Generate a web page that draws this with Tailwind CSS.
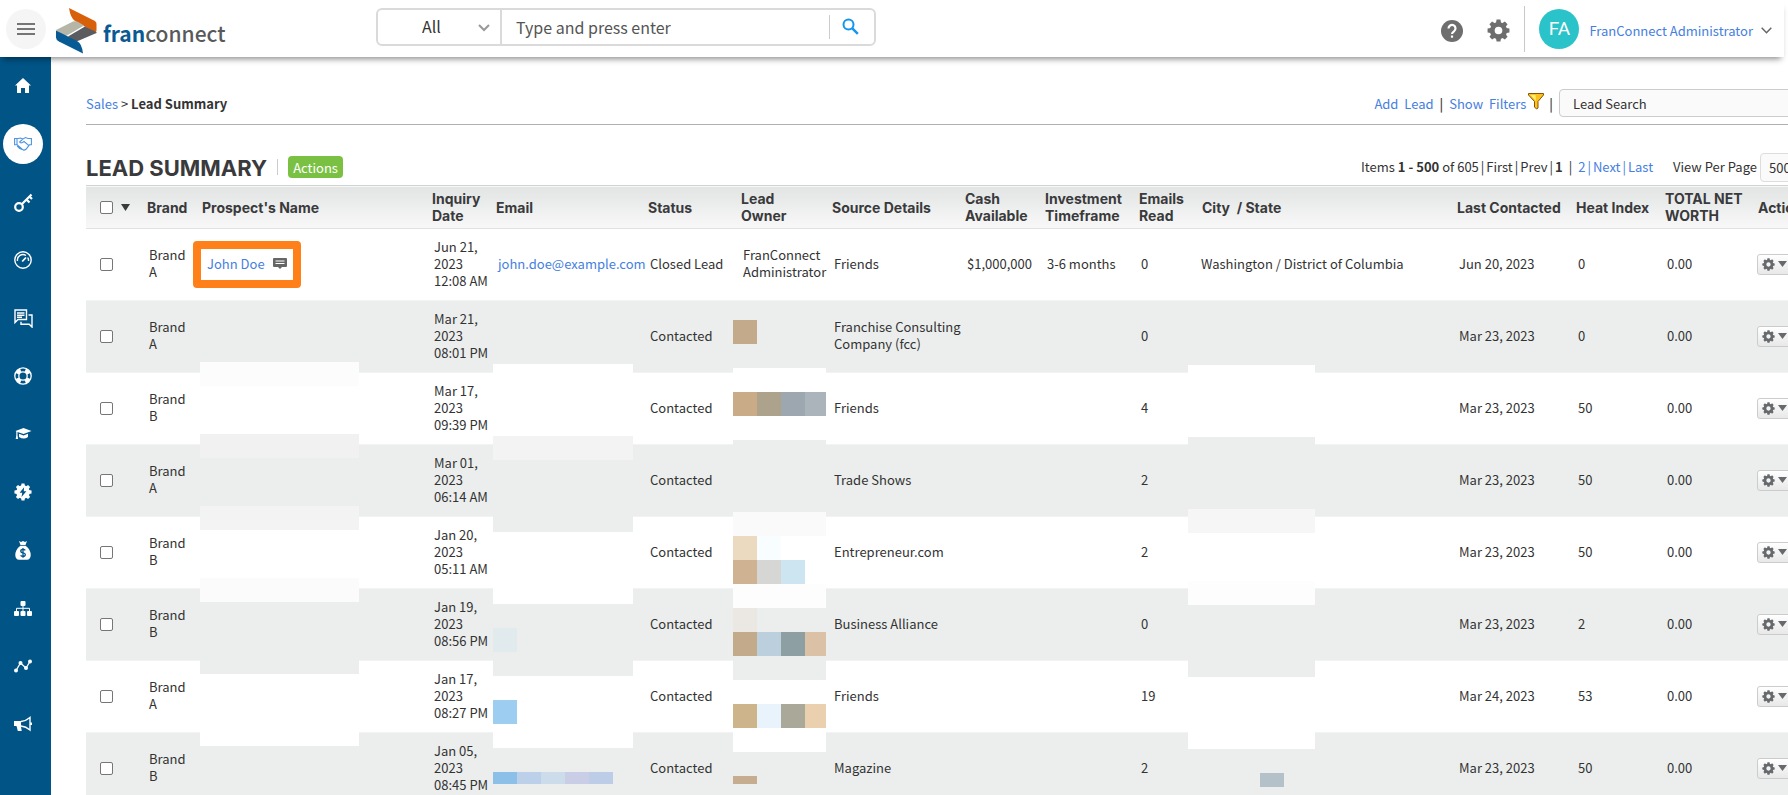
<!DOCTYPE html>
<html lang="en">
<head>
<meta charset="utf-8">
<title>Lead Summary</title>
<script src="https://cdn.jsdelivr.net/npm/@tailwindcss/browser@4"></script>
</head>
<body class="bg-white overflow-hidden h-screen flex flex-col text-[13px] leading-[17px] text-[#333] font-['Noto_Sans_CJK_SC','Noto_Sans',sans-serif]">

<svg class="hidden" aria-hidden="true">
  <symbol id="gear" viewBox="0 0 24 24">
    <circle cx="12" cy="12" r="6.5" fill="none" stroke="currentColor" stroke-width="5"/>
    <g fill="currentColor">
      <path id="tooth" d="M9.4 4 10 0.6h4L14.600 4v2H9.400z"/>
      <use href="#tooth" transform="rotate(45 12 12)"/><use href="#tooth" transform="rotate(90 12 12)"/>
      <use href="#tooth" transform="rotate(135 12 12)"/><use href="#tooth" transform="rotate(180 12 12)"/>
      <use href="#tooth" transform="rotate(225 12 12)"/><use href="#tooth" transform="rotate(270 12 12)"/>
      <use href="#tooth" transform="rotate(315 12 12)"/>
    </g>
  </symbol>
</svg>

<header class="relative z-20 shrink-0 h-[57px] mr-1 bg-white shadow-[0_5px_6px_-3px_rgba(0,0,0,0.45)] flex items-center">
  <button aria-label="Menu" class="ml-1.5 size-10 rounded-full bg-[#f5f5f5] flex items-center justify-center">
    <svg class="w-[18px] h-3" viewBox="0 0 18 12" fill="#757575"><path d="M0 0h18v2H0zM0 5h18v2H0zM0 10h18v2H0z"/></svg>
  </button>
  <a href="#" class="ml-2.5 w-[164px] flex items-center text-[21px] leading-6">
    <svg class="shrink-0 w-[41px] h-[46px] mt-1" viewBox="0 0 41 46" aria-hidden="true">
      <path d="M13 0l24 12q3.500 1.500 3.500 4v6.500q0 1.500-2 1.500L19 13q-4.500-3-6-13z" fill="#d9600a"/>
      <path d="M0 22l17-8.500q3-1 6 1l5 3L11 27.500 8 28 0 22z" fill="#b5b6a8"/>
      <path d="M29 18.500L40.500 24v1L23 32.500q-3 1-6 0L12 28.500z" fill="#5b5c60"/>
      <path d="M0 22.500L21 33q5 2.500 6 12.500L3 33.500q-3-1.500-3-4z" fill="#075a93"/>
    </svg>
    <span class="ml-1.5 mt-2"><b class="text-[#075a93] font-bold">fran</b><span class="text-[#58595b] font-medium">connect</span></span>
  </a>

  <form class="ml-[156px] w-[500px] h-[38px] -mt-1 border-2 border-[#dadada] rounded-md flex items-center text-[16px]">
    <div class="relative w-[124px] h-full border-r-2 border-[#dadada]">
      <select aria-label="Search scope" class="appearance-none size-full pl-[44px] outline-none"><option>All</option></select>
      <svg class="absolute right-2.5 top-3.5 w-3 h-2 pointer-events-none" viewBox="0 0 12 8" fill="none" stroke="#999" stroke-width="2"><path d="M1 1l5 5 5-5"/></svg>
    </div>
    <input aria-label="Search" placeholder="Type and press enter" class="flex-1 min-w-0 h-full pl-3.5 outline-none placeholder:text-[#555]">
    <button type="button" aria-label="Search" class="w-[45px] h-6 border-l border-[#ccc] pl-3">
      <svg class="size-[17px]" viewBox="0 0 17 17" fill="none" stroke="#1296ee" stroke-width="2"><circle cx="6.500" cy="6.500" r="5"/><path d="M10.300 10.300l5.500 5.500" stroke-width="2.500"/></svg>
    </button>
  </form>

  <div class="ml-auto h-full flex items-center">
    <button aria-label="Help" class="mt-1"><svg class="size-[22px]" viewBox="0 0 22 22"><circle cx="11" cy="11" r="11" fill="#6e6e6e"/><path d="M7.500 8.500a3.500 3.500 0 1 1 5.500 2.800q-2 1.400-2 2.600" fill="none" stroke="#fff" stroke-width="2.200"/><path d="M9.900 15.500h2.200v2.200H9.900z" fill="#fff"/></svg></button>
    <button aria-label="Settings" class="mt-1 ml-6 text-[#6e6e6e]"><svg class="size-[23px]"><use href="#gear"/></svg></button>
    <div class="ml-3.5 w-px h-[46px] bg-[#c8c8c8]"></div>
    <span class="ml-3.5 size-10 rounded-full bg-[#2bc3ca] text-white text-[19px] flex items-center justify-center font-[Roboto,sans-serif]">FA</span>
    <button class="ml-2.5 mt-1 mr-3 flex items-center text-[#4580e0]">FranConnect Administrator
      <svg class="ml-2 w-[11px] h-[7px]" viewBox="0 0 11 7" fill="none" stroke="#666" stroke-width="1.500"><path d="M.7.700l4.800 5 4.800-5"/></svg>
    </button>
  </div>
</header>

<div class="flex flex-1 min-h-0">
  <nav aria-label="Modules" class="shrink-0 w-[51px] pr-[5px] bg-[#005486] text-white">
    <ul class="flex flex-col items-center">
      <li><a href="#" aria-label="Home" class="flex h-[58px] items-center"><svg class="size-[18px]" viewBox="0 0 18 18" fill="currentColor"><path d="M9 1l8 7.500h-2V16h-4v-5H7v5H3V8.500H1z"/></svg></a></li>
      <li><a href="#" aria-label="Sales" class="flex h-[58px] items-center"><span class="size-10 rounded-full bg-white flex items-center justify-center"><svg class="w-[18px] h-[14px]" viewBox="0 0 18 14" fill="none" stroke="#4e93e0" stroke-width="1.100"><path d="M.6 1.500h3.500L6.500 1l2.500 1 2.500-1.400L14 1.500h3.400v6.300h-2L12 12.300q-1.500 1.200-3 .7L3.200 7.800H.600zM9 2L5.500 5q1 1.500 3 .5l1.500-1 5.300 4.400M3.200 9l2.500 2.500 4 1.500M3 1.500v6"/></svg></span></a></li>
      <li><a href="#" aria-label="Franchise keys" class="flex h-[58px] items-center"><svg class="size-[19px]" viewBox="0 0 19 19" fill="none" stroke="currentColor" stroke-width="2.200"><circle cx="5" cy="14" r="3.800"/><path d="M8 11L17.500 1.500M12.500 6.500l3 3M15.500 3.500l2.500 2.500"/></svg></a></li>
      <li><a href="#" aria-label="Dashboard" class="flex h-[58px] items-center"><svg class="size-[18px]" viewBox="0 0 18 18" fill="none" stroke="currentColor" stroke-width="1.400"><circle cx="9" cy="9" r="8.200"/><path d="M3.500 10A5.500 5.500 0 0 1 12 4.500M14.500 10a5.500 5.500 0 0 0-.8-3.500"/><path d="M8.200 10.500L12 6.500" stroke-width="1.800"/></svg></a></li>
      <li><a href="#" aria-label="Messages" class="flex h-[58px] items-center"><svg class="size-[19px]" viewBox="0 0 19 19" fill="none" stroke="currentColor" stroke-width="1.400"><path d="M1 1h11.500v9.500H4L1 13.500zM3 4h7.500M3 6.200h7.500M3 8.300h5M14.500 6H18v12l-2.800-2.800H7v-2.500"/></svg></a></li>
      <li><a href="#" aria-label="Support" class="flex h-[58px] items-center"><svg class="size-[18px]" viewBox="0 0 18 18" fill="none" stroke="currentColor"><circle cx="9" cy="9" r="8.200" stroke-width="1.300"/><circle cx="9" cy="9" r="4.200" stroke-width="1.300"/><circle cx="9" cy="9" r="6.200" stroke-width="3.600" pathLength="80" stroke-dasharray="10 10" stroke-dashoffset="-5"/></svg></a></li>
      <li><a href="#" aria-label="Training" class="flex h-[58px] items-center"><svg class="w-[18px] h-3.5" viewBox="0 0 18 14" fill="currentColor"><path d="M9.500 1L17.500 4 9.500 7 3.500 4.900v3.300l.6 3.800H1.700l.6-3.800V4.400L1.500 4zM5 6.700l4.500 1.700L14 6.700v3.200q-4 3-9 0z"/></svg></a></li>
      <li><a href="#" aria-label="Operations" class="flex h-[58px] items-center"><svg class="size-[18px]" viewBox="0 0 24 24"><circle cx="12" cy="12" r="8" fill="#fff"/><use href="#gear"/><path d="M13.500 5.500L7.500 13H11l-1 5.500 6.500-7.500H13z" fill="#005486"/></svg></a></li>
      <li><a href="#" aria-label="Finance" class="flex h-[58px] items-center"><svg class="w-4 h-[19px]" viewBox="0 0 16 19"><path d="M4 0l2 1 2-1 2 1 2-1-1.500 4h-5zM5.300 4.800h5.400Q16 9 15.700 14.500q-.3 4-3.700 4.300H4Q.600 18.500.300 14.500 0 9 5.300 4.800z" fill="currentColor"/><path d="M10.300 9.300Q9.500 8.300 8 8.300q-2.200 0-2.200 1.700T8 11.800t2.300 1.800T8 15.300q-1.600 0-2.400-1M8 7v9.700" fill="none" stroke="#005486" stroke-width="1.300"/></svg></a></li>
      <li><a href="#" aria-label="Organization" class="flex h-[58px] items-center"><svg class="w-[18px] h-[15px]" viewBox="0 0 18 15" fill="currentColor"><rect x="6.500" y="0" width="5" height="5" rx="1"/><rect x="0" y="10" width="5" height="5" rx="1"/><rect x="6.500" y="10" width="5" height="5" rx="1"/><rect x="13" y="10" width="5" height="5" rx="1"/><path d="M2.500 10V7.300h13V10M9 5v5" fill="none" stroke="currentColor"/></svg></a></li>
      <li><a href="#" aria-label="Analytics" class="flex h-[58px] items-center"><svg class="w-[18px] h-3.5" viewBox="0 0 18 14" fill="currentColor"><path d="M2 11.500L6.500 4l5.500 5L16 2.500" fill="none" stroke="currentColor" stroke-width="1.300"/><circle cx="2" cy="11.500" r="2"/><circle cx="6.500" cy="4" r="2"/><circle cx="12" cy="9" r="2"/><circle cx="16" cy="2.500" r="2"/></svg></a></li>
      <li><a href="#" aria-label="Marketing" class="flex h-[58px] items-center"><svg class="w-[18px] h-4" viewBox="0 0 18 16" fill="currentColor"><path d="M0 5h7v5.500l.7 4.500H3.800L2.500 10H0z"/><path d="M7 5.500Q12 5 16 1.500v12.500Q12 10.500 7 10M17.300 6.500v2.500" fill="none" stroke="currentColor" stroke-width="1.400"/></svg></a></li>
    </ul>
  </nav>

  <main class="flex-1 min-w-0 overflow-hidden pl-[35px]">
    <div class="min-w-[1734px]">
      <div class="h-[68px] pt-8 border-b border-[#b0b0b0] flex justify-between">
        <p class="pt-1.5"><a href="#" class="text-[#4580e0]">Sales</a> &gt; <b>Lead Summary</b></p>
        <div class="flex text-[#333]">
          <a href="#" class="pt-1.5 text-[#4580e0]">Add&nbsp; Lead</a><span class="pt-1.5 px-1.5 font-medium">|</span>
          <a href="#" class="pt-1.5 text-[#4580e0]">Show&nbsp; Filters</a>
          <svg class="ml-0.5 mt-1 w-4 h-[17px]" viewBox="0 0 16 17"><path d="M.5.500h15v1.500L10 8.500V15l-1.500 1L6.500 14V8.500L.500 2z" fill="#fbc21e" stroke="#8a5208"/><path d="M2.500 2h5L8 8z" fill="#fff06a"/></svg>
          <span class="pt-1.5 pl-[5px] pr-1.5 font-medium">|</span>
          <input aria-label="Lead Search" value="Lead Search" class="w-[261px] h-7 px-[13px] border border-[#ccc] rounded bg-[#fafafa] outline-none">
        </div>
      </div>

      <div class="h-[60px] flex justify-between pt-[27px]">
        <div class="flex items-start">
          <h1 class="pt-1 text-[22px] leading-6 font-bold text-[#3a3a3c] font-[Inter,sans-serif]">LEAD SUMMARY</h1>
          <span class="ml-2.5 mt-[7px] w-px h-4 bg-[#ccc]"></span>
          <button class="ml-2.5 mt-1 h-[22px] px-[5px] rounded-sm bg-[#7ac143] text-white">Actions</button>
        </div>
        <div class="flex items-start">
          <p class="pt-1.5 flex"><span>Items <b>1 - 500</b> of 605</span><span class="px-0.5">|</span>First<span class="px-0.5">|</span>Prev<span class="px-0.5">|</span><b>1</b><span class="px-1.5">|</span><a href="#" class="text-[#4580e0]">2</a><span class="px-0.5 text-[#4580e0]">|</span><a href="#" class="text-[#4580e0]">Next</a><span class="px-0.5 text-[#4580e0]">|</span><a href="#" class="text-[#4580e0]">Last</a></p>
          <label for="per-page" class="pt-1.5 ml-5">View Per Page</label>
          <select id="per-page" class="ml-[3px] mt-px w-[60px] h-[29px] pl-2 appearance-none border border-[#ddd] rounded bg-[#fafafa]"><option>500</option></select>
        </div>
      </div>

      <div class="relative">
        <table class="w-full table-fixed border-collapse text-left">
          <colgroup>
            <col class="w-[55px]"><col class="w-[55px]"><col class="w-[230px]"><col class="w-[64px]"><col class="w-[152px]"><col class="w-[93px]"><col class="w-[91px]"><col class="w-[133px]"><col class="w-[80px]"><col class="w-[94px]"><col class="w-[63px]"><col class="w-[255px]"><col class="w-[119px]"><col class="w-[89px]"><col class="w-[93px]"><col class="w-[68px]">
          </colgroup>
          <thead class="text-[14px] font-[Inter,sans-serif]">
            <tr class="h-[43px] bg-linear-to-b from-[#e2e5e4] to-[#f8f8f8] border-t border-b border-t-[#d0d3d2] border-b-[#e2e2e2] [&>th]:px-1.5 [&>th]:font-bold [&>th]:text-[#3a3a3c] [&>th]:whitespace-nowrap">
              <th><span class="flex items-center pl-2"><input type="checkbox" aria-label="Select all" class="appearance-none size-[13px] border border-[#767676] rounded-[2px] bg-white"><svg class="ml-2 w-[9px] h-[7px]" viewBox="0 0 9 7"><path d="M0 0h9L4.500 7z" fill="#3a3a3c"/></svg></span></th>
              <th>Brand</th><th>Prospect's Name</th><th>Inquiry<br>Date</th><th>Email</th><th>Status</th><th>Lead<br>Owner</th><th>Source Details</th><th>Cash<br>Available</th><th>Investment<br>Timeframe</th><th>Emails<br>Read</th><th>City &nbsp;/ State</th><th>Last Contacted</th><th>Heat Index</th><th>TOTAL NET<br>WORTH</th><th>Actions</th>
            </tr>
          </thead>
          <tbody id="leads"></tbody>
        </table>

        <!-- Highlight around the first prospect -->
        <div class="absolute left-[107px] top-14 w-[108px] h-[47px] border-8 border-[#ff8019] rounded pointer-events-none"></div>

        <!-- Redacted values, one strip per column -->
        <div class="absolute left-[114px] top-[177px] w-[159px] flex flex-col">
          <i class="h-6 bg-[#fcfcfc]"></i><i class="h-12 bg-white"></i><i class="h-6 bg-[#f1f1f1]"></i><i class="h-12 bg-[#ebeeed]"></i><i class="h-6 bg-[#f3f3f3]"></i><i class="h-12 bg-white"></i><i class="h-6 bg-[#fbfbfb]"></i><i class="h-18 bg-[#ebeeed]"></i><i class="h-18 bg-white"></i>
        </div>
        <div class="absolute left-[407px] top-[179px] w-[140px] flex flex-col">
          <i class="h-18 bg-white"></i><i class="h-6 bg-[#f3f3f3]"></i><i class="h-18 bg-[#ebeeed]"></i><i class="h-18 bg-white"></i>
          <i class="h-18 py-6 bg-[#ebeeed] flex"><i class="w-6 bg-[#e1eaed]"></i></i>
          <i class="h-18 py-6 bg-white flex"><i class="w-6 bg-[#9ecdf2]"></i></i>
          <i class="mt-6 h-3 flex"><i class="w-6 bg-[#8dc0e8]"></i><i class="w-6 bg-[#bdd0e9]"></i><i class="w-6 bg-[#cddcea]"></i><i class="w-6 bg-[#c9cee6]"></i><i class="w-6 bg-[#bdcde7]"></i></i>
        </div>
        <div class="absolute left-[647px] top-[135px] w-[93px] flex flex-col">
          <i class="h-6 w-6 bg-[#c2aa8b]"></i>
          <i class="mt-6 h-6 bg-white"></i>
          <i class="h-6 flex"><i class="w-6 bg-[#caab88]"></i><i class="w-6 bg-[#ada38d]"></i><i class="w-6 bg-[#9ca7af]"></i><i class="flex-1 bg-[#abb3bb]"></i></i>
          <i class="h-6 bg-white"></i><i class="h-18 bg-[#ebeeed]"></i><i class="h-6 bg-[#fafafa]"></i>
          <i class="h-6 bg-white flex"><i class="w-6 bg-[#ecdac0]"></i><i class="w-6 bg-[#f8fdff]"></i></i>
          <i class="h-6 bg-white flex"><i class="w-6 bg-[#ceb291]"></i><i class="w-6 bg-[#d6d6d5]"></i><i class="w-6 bg-[#cce5f1]"></i></i>
          <i class="h-6 bg-[#fdfdfd]"></i>
          <i class="h-6 bg-[#ebeeed] flex"><i class="w-6 bg-[#ebe8e4]"></i></i>
          <i class="h-6 flex"><i class="w-6 bg-[#c2aa8b]"></i><i class="w-6 bg-[#bccfdd]"></i><i class="w-6 bg-[#8e9fa3]"></i><i class="flex-1 bg-[#dbc2a6]"></i></i>
          <i class="h-6 bg-[#ebeeed]"></i><i class="h-6 bg-white"></i>
          <i class="h-6 flex"><i class="w-6 bg-[#ceb48b]"></i><i class="w-6 bg-[#e8f3fb]"></i><i class="w-6 bg-[#aaa999]"></i><i class="flex-1 bg-[#ebd0b0]"></i></i>
          <i class="h-6 bg-white"></i><i class="mt-6 h-2 w-6 bg-[#c6ad90]"></i>
        </div>
        <div class="absolute left-[1102px] top-[180px] w-[127px] flex flex-col">
          <i class="h-18 bg-white"></i><i class="h-18 bg-[#ebeeed]"></i><i class="h-6 bg-[#f6f6f6]"></i><i class="h-12 bg-white"></i><i class="h-6 bg-[#fdfdfd]"></i><i class="h-18 bg-[#ebeeed]"></i><i class="h-18 bg-white"></i><i class="mt-6 ml-18 h-3.5 w-6 bg-[#b4c1c9]"></i>
        </div>
      </div>
    </div>
  </main>
</div>

<script>
  const leads = [
    { brand: 'A', name: 'John Doe', date: 'Jun 21,', time: '12:08 AM', email: 'john.doe@example.com', status: 'Closed Lead', owner: 'FranConnect<br>Administrator', source: 'Friends', cash: '$1,000,000', frame: '3-6 months', read: 0, city: 'Washington / District of Columbia', last: 'Jun 20, 2023', heat: 0 },
    { brand: 'A', date: 'Mar 21,', time: '08:01 PM', source: 'Franchise Consulting<br>Company (fcc)', read: 0, heat: 0 },
    { brand: 'B', date: 'Mar 17,', time: '09:39 PM', source: 'Friends', read: 4, heat: 50 },
    { brand: 'A', date: 'Mar 01,', time: '06:14 AM', source: 'Trade Shows', read: 2, heat: 50 },
    { brand: 'B', date: 'Jan 20,', time: '05:11 AM', source: 'Entrepreneur.com', read: 2, heat: 50 },
    { brand: 'B', date: 'Jan 19,', time: '08:56 PM', source: 'Business Alliance', read: 0, heat: 2 },
    { brand: 'A', date: 'Jan 17,', time: '08:27 PM', source: 'Friends', read: 19, last: 'Mar 24, 2023', heat: 53 },
    { brand: 'B', date: 'Jan 05,', time: '08:45 PM', source: 'Magazine', read: 2, heat: 50 },
  ];
  document.getElementById('leads').innerHTML = leads.map((l, i) => `
    <tr class="h-18 border-b border-[#f2f4f3] even:bg-[#ebeeed] whitespace-nowrap [&>td]:pl-2 [&>td]:pb-[3px] [&>td]:align-middle">
      <td><input type="checkbox" aria-label="Select lead ${i + 1}" class="block ml-1.5 mt-0.5 appearance-none size-[13px] border border-[#767676] rounded-[2px] bg-white"></td>
      <td>Brand<br>${l.brand}</td>
      <td>${l.name ? `<span class="flex items-center pl-[3px]"><a href="#" class="text-[#4580e0]">${l.name}</a><svg class="ml-2 w-3.5 h-[11px]" viewBox="0 0 14 11"><path d="M1 0h12q1 0 1 1v7q0 1-1 1H9l-2 2-2-2H1q-1 0-1-1V1q0-1 1-1z" fill="#666"/><path d="M2.500 2.500h9v1h-9zM2.500 5h9v1h-9z" fill="#fff"/></svg></span>` : ''}</td>
      <td>${l.date}<br>2023<br>${l.time}</td>
      <td>${l.email ? `<a href="#" class="text-[#4580e0]">${l.email}</a>` : ''}</td>
      <td>${l.status || 'Contacted'}</td>
      <td>${l.owner || ''}</td>
      <td>${l.source}</td>
      <td>${l.cash || ''}</td>
      <td>${l.frame || ''}</td>
      <td>${l.read}</td>
      <td class="pl-[5px]!">${l.city || ''}</td>
      <td>${l.last || 'Mar 23, 2023'}</td>
      <td>${l.heat}</td>
      <td>0.00</td>
      <td><button aria-label="Lead actions" class="mt-0.5 -ml-[3px] w-10 h-[21px] pl-1 flex items-center border border-[#ccc] rounded-[3px] bg-linear-to-b from-white to-[#e8e8e8] text-[#666a6d]"><svg class="size-[13px]"><use href="#gear"/></svg><svg class="ml-[3px] w-[9px] h-1.5" viewBox="0 0 9 6"><path d="M0 0h9L4.500 6z" fill="currentColor"/></svg></button></td>
    </tr>`).join('');
</script>
</body>
</html>
